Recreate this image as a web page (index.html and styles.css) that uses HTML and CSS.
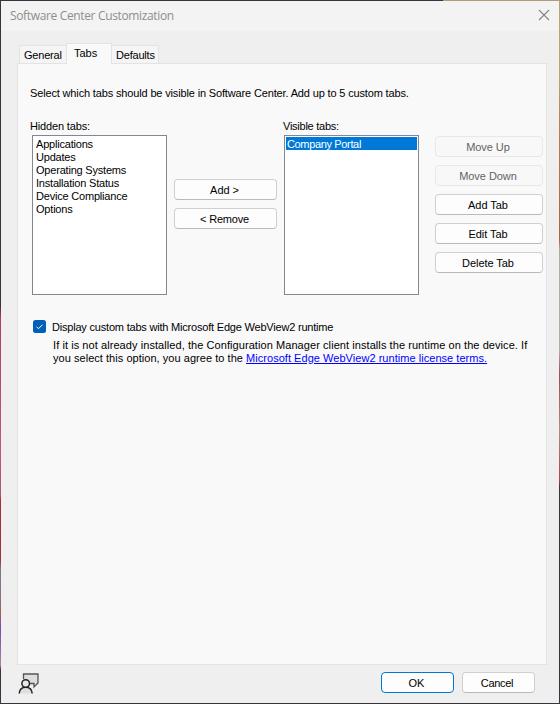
FILE: index.html
```html
<!DOCTYPE html>
<html lang="en">
<head>
<meta charset="utf-8">
<title>Software Center Customization</title>
<link rel="stylesheet" href="styles.css">
</head>
<body>
<div class="desktop">
<div class="window">
  <header class="titlebar">
    <span class="title">Software Center Customization</span>
    <svg class="close" width="12" height="12" viewBox="0 0 12 12"><path d="M1 1l10 10M11 1L1 11" fill="none" stroke="#858585" stroke-width="1.1"/></svg>
  </header>
  <nav class="tabs">
    <span class="tab tab-general">General</span>
    <span class="tab tab-active">Tabs</span>
    <span class="tab tab-defaults">Defaults</span>
  </nav>
  <main class="page">
    <p class="intro">Select which tabs should be visible in Software Center. Add up to 5 custom tabs.</p>
    <div class="columns">
      <section class="column">
        <div class="label label-hidden">Hidden tabs:</div>
        <ul class="list">
          <li>Applications</li>
          <li>Updates</li>
          <li>Operating Systems</li>
          <li>Installation Status</li>
          <li>Device Compliance</li>
          <li>Options</li>
        </ul>
      </section>
      <div class="transfer">
        <button class="btn">Add &gt;</button>
        <button class="btn btn-remove">&lt; Remove</button>
      </div>
      <section class="column">
        <div class="label label-visible">Visible tabs:</div>
        <ul class="list">
          <li class="selected">Company Portal</li>
        </ul>
      </section>
      <div class="actions">
        <button class="btn" disabled>Move Up</button>
        <button class="btn" disabled>Move Down</button>
        <button class="btn">Add Tab</button>
        <button class="btn">Edit Tab</button>
        <button class="btn">Delete Tab</button>
      </div>
    </div>
    <div class="option">
      <svg class="check" width="13" height="13" viewBox="0 0 13 13"><rect width="13" height="13" rx="2.5" fill="#005fb8"/><path d="M3.5 6.7l2 2 4-4" fill="none" stroke="#fff" stroke-width="1"/></svg>
      <span class="option-label">Display custom tabs with Microsoft Edge WebView2 runtime</span>
    </div>
    <div class="note">
      <div class="note-first">If it is not already installed, the Configuration Manager client installs the runtime on the device. If</div>
      <div class="note-second">you select this option, you agree to the <a class="link">Microsoft Edge WebView2 runtime license terms.</a></div>
    </div>
  </main>
  <footer class="footer">
    <svg class="feedback" width="22" height="22" viewBox="0 0 22 22" fill="none">
      <path d="M5.500 7V2h14.500v9l-4 4v-3.500h-5" fill="#dedede" stroke="#555" stroke-width="1.300"/>
      <path d="M1.200 21.500c.3-4 3-6.200 6.500-6.200s6.200 2.200 6.500 6.200" fill="#dedede" stroke="#222" stroke-width="1.500"/>
      <circle cx="7.700" cy="11.500" r="3.800" fill="#e8e8e8" stroke="#222" stroke-width="1.500"/>
    </svg>
    <button class="btn btn-default">OK</button>
    <button class="btn btn-cancel">Cancel</button>
  </footer>
</div>
</div>
</body>
</html>
```
FILE: styles.css
```css
* { box-sizing: border-box; }
body { margin: 0; font: 11px/13px "Liberation Sans", Arial, sans-serif; color: #000; }
.desktop {
  width: 560px; height: 704px; padding: 1px;
  background:
    linear-gradient(90deg, #39333f 0 443px, #b39a78 443px) 0 0 / 560px 1px no-repeat,
    linear-gradient(#39333f 0 306px, #b53a62 318px, #c0587c 450px, #b0517f 495px, #ab2c3c 500px, #a52f42 560px, #7d7790 570px, #8d7080 600px, #a45f58 612px, #7050b0 630px, #b08098 665px, #39333f 670px) 0 0 / 1px 704px no-repeat,
    linear-gradient(#b5a673 0 80px, #b98055 120px, #b0603f 240px, #b5aca0 250px 350px, #a04858 375px, #b09070 430px, #b04050 480px, #39333f 487px) 559px 0 / 1px 704px no-repeat,
    #39333f;
}
.window { width: 558px; height: 702px; background: #efefef; display: flex; flex-direction: column; }
.titlebar { height: 30px; background: #f3f3f3; display: flex; align-items: center; justify-content: space-between; padding: 0 9px; }
.title { font: 12px/16px "Open Sans", "Noto Sans", sans-serif; color: #8e8e8e; letter-spacing: -0.35px; white-space: nowrap; }
.close { margin-top: -2px; }
.tabs { display: flex; align-items: flex-end; height: 32px; padding-left: 18px; }
.tab { height: 18px; border: 1px solid #e3e3e3; border-bottom: 0; background: #f5f5f5; line-height: 18px; white-space: nowrap; }
.tab-general { width: 47px; padding-left: 4px; border-right: 0; letter-spacing: -0.2px; }
.tab-active { width: 46px; height: 21px; margin-bottom: -1px; padding-left: 7px; background: #f9f9f9; z-index: 1; }
.tab-defaults { width: 47px; padding-left: 4px; border-left: 0; letter-spacing: -0.2px; }
.page { width: 530px; height: 602px; margin-left: 16px; border: 1px solid #e3e3e3; background: #f9f9f9; padding: 23px 0 0 12px; }
.intro { margin: 0; white-space: nowrap; letter-spacing: -0.15px; }
.columns { display: flex; margin-top: 20px; height: 175px; }
.column { width: 137px; }
.label { height: 15px; white-space: nowrap; letter-spacing: -0.15px; }
.label-visible { padding-left: 1px; letter-spacing: -0.25px; }
.list { list-style: none; margin: 0 0 0 2px; padding: 1px; width: 135px; height: 160px; border: 1px solid #828790; background: #fff; white-space: nowrap; letter-spacing: -0.2px; }
.list li { height: 13px; line-height: 15px; padding-left: 2px; }
.list .selected { background: #0078d7; color: #fff; padding-left: 1px; letter-spacing: -0.35px; }
.btn { height: 21px; padding: 1px 2px 0 0; border: 1px solid #d0d0d0; border-bottom-color: #bababa; border-radius: 4px; background: #fdfdfd; font: inherit; color: #000; text-align: center; letter-spacing: -0.05px; }
.btn:disabled { border-color: #e8e8e8; background: #f8f8f8; color: #636363; }
.transfer { width: 103px; margin: 59px 5px 0 7px; display: flex; flex-direction: column; gap: 8px; }
.transfer .btn-remove { letter-spacing: -0.2px; }
.actions { width: 108px; margin: 16px 0 0 16px; display: flex; flex-direction: column; gap: 8px; }
.option { display: flex; align-items: center; gap: 6px; margin: 25px 0 0 3px; height: 13px; white-space: nowrap; letter-spacing: -0.2px; }
.option-label { padding-top: 1px; }
.note { margin: 6px 0 0 23px; white-space: nowrap; letter-spacing: 0.07px; }
.note-second { letter-spacing: 0.04px; }
.link { color: #00f; text-decoration: underline; }
.footer { flex: 1; display: flex; align-items: flex-start; padding: 7px 0 0 17px; }
.footer .btn { width: 73px; }
.footer .btn-default { margin: 0 8px 0 341px; border-color: #0078d4; }
.footer .btn-cancel { padding-right: 3px; letter-spacing: -0.3px; }
```
